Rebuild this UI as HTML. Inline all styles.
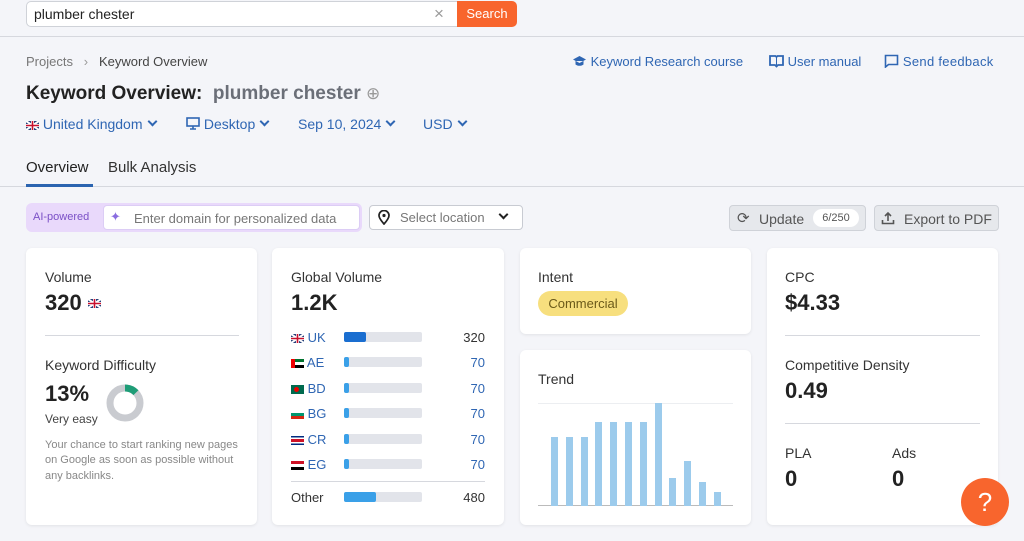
<!DOCTYPE html>
<html><head><meta charset="utf-8"><style>
*{box-sizing:border-box;margin:0;padding:0}
body{width:1024px;height:541px;overflow:hidden;background:#f4f5f9;font-family:"Liberation Sans",sans-serif;color:#333;position:relative}
.a{position:absolute;white-space:nowrap}
.card{position:absolute;background:#fff;border-radius:6px;box-shadow:0 1px 3px rgba(0,0,0,.08)}
.lbl{font-size:14px;color:#333}
.big{font-size:22px;font-weight:bold;color:#222}
.blue{color:#2f66b3}
.bar{position:absolute;height:10px;width:78px;background:#e2e4ea;border-radius:2px}
.bar i{display:block;height:10px;background:#3aa0e8;border-radius:2px}
.tb{position:absolute;width:7px;background:#9ccbec}
.flag{display:inline-block;width:13px;height:9px;vertical-align:middle}
.val{position:absolute;width:60px;text-align:right;font-size:13px;left:425px}
.chev{display:inline-block;width:7px;height:7px;border-right:2px solid #2f66b3;border-bottom:2px solid #2f66b3;transform:rotate(45deg);margin-left:6px;vertical-align:4px}
</style></head><body>
<div class="a" style="left:0;top:36px;width:1024px;height:1px;background:#d6d8de"></div>
<div class="a" style="left:26px;top:1px;width:436px;height:26px;background:#fff;border:1px solid #cfd2d8;border-radius:5px 0 0 5px"></div>
<div class="a" style="left:34px;top:6px;font-size:14px;color:#222">plumber chester</div>
<div class="a" style="left:434px;top:4px;font-size:17px;color:#999">×</div>
<div class="a" style="left:457px;top:1px;width:60px;height:26px;background:#f8652d;border-radius:0 5px 5px 0;color:#fff;font-size:13px;text-align:center;line-height:26px">Search</div>

<div class="a" style="left:26px;top:54px;font-size:13px;color:#777">Projects &nbsp;&nbsp;<span style="color:#999">›</span>&nbsp;&nbsp; <span style="color:#444">Keyword Overview</span></div>
<div class="a blue" style="left:572px;top:54px;font-size:13px">
<svg width="15" height="12" viewBox="0 0 15 12" style="vertical-align:-1px"><path d="M7.5 1L14 4.5 7.5 8 1 4.5z M3.5 6v3.5c2 1.7 6 1.7 8 0V6" fill="#2f66b3"/></svg> Keyword Research course</div>
<div class="a blue" style="left:769px;top:54px;font-size:13px"><svg width="15" height="14" viewBox="0 0 15 14" style="vertical-align:-2px"><path d="M1 2h5.5l1 1 1-1H14v9H9l-1.5 1.5L6 11H1z" fill="none" stroke="#2f66b3" stroke-width="1.8"/><path d="M7.5 3v8" stroke="#2f66b3"/></svg> User manual</div>
<div class="a blue" style="left:884px;top:54px;font-size:13px;letter-spacing:0.3px"><svg width="15" height="14" viewBox="0 0 15 14" style="vertical-align:-2px"><path d="M1.5 1.5h12v9h-9l-3 2.5z" fill="none" stroke="#2f66b3" stroke-width="1.6"/></svg> Send feedback</div>

<div class="a" style="left:26px;top:83px;font-size:19px;font-weight:bold;color:#222">Keyword Overview:&nbsp; <span style="color:#6b6f78">plumber chester</span> <span style="font-weight:normal;color:#999;font-size:17px">⊕</span></div>

<div class="a blue" style="left:26px;top:116px;font-size:14px"><svg class="flag" viewBox="0 0 13 9"><rect width="13" height="9" fill="#24407a"/><path d="M0 0L13 9M13 0L0 9" stroke="#fff" stroke-width="2"/><path d="M6.5 0v9M0 4.5h13" stroke="#fff" stroke-width="3"/><path d="M6.5 0v9M0 4.5h13" stroke="#c8102e" stroke-width="1.6"/></svg> United Kingdom<span class="chev"></span></div>
<div class="a blue" style="left:186px;top:116px;font-size:14px"><svg width="14" height="13" viewBox="0 0 14 13" style="vertical-align:-1px"><rect x="1" y="1" width="12" height="8" fill="none" stroke="#2f66b3" stroke-width="1.6"/><path d="M4 12h6M7 9v3" stroke="#2f66b3" stroke-width="1.6"/></svg> Desktop<span class="chev"></span></div>
<div class="a blue" style="left:298px;top:116px;font-size:14px">Sep 10, 2024<span class="chev"></span></div>
<div class="a blue" style="left:423px;top:116px;font-size:14px">USD<span class="chev"></span></div>

<div class="a" style="left:26px;top:159px;font-size:15px;color:#222">Overview</div>
<div class="a" style="left:108px;top:159px;font-size:15px;color:#333">Bulk Analysis</div>
<div class="a" style="left:0;top:186px;width:1024px;height:1px;background:#d6d8de"></div>
<div class="a" style="left:26px;top:184px;width:67px;height:3px;background:#2b64b0"></div>

<div class="a" style="left:26px;top:203px;width:336px;height:29px;background:#e9d9fb;border-radius:6px"></div>
<div class="a" style="left:33px;top:211px;font-size:11px;color:#7a4fc6">AI-powered</div>
<div class="a" style="left:103px;top:205px;width:257px;height:25px;background:#fff;border-radius:4px;border:1px solid #dccdf5"></div>
<div class="a" style="left:110px;top:209px;font-size:13px;color:#8a6de0">✦</div>
<div class="a" style="left:134px;top:211px;font-size:13px;color:#777">Enter domain for personalized data</div>
<div class="a" style="left:369px;top:205px;width:154px;height:25px;background:#fff;border:1px solid #c8cbd2;border-radius:4px"></div>
<div class="a" style="left:377px;top:210px"><svg width="14" height="15" viewBox="0 0 14 15"><path d="M7 14C3 9.5 2 7.5 2 5.5a5 5 0 0110 0c0 2-1 4-5 8.5z" fill="none" stroke="#222" stroke-width="1.7"/><circle cx="7" cy="5.5" r="1.6" fill="#222"/></svg></div>
<div class="a" style="left:400px;top:210px;font-size:13px;color:#777">Select location</div>
<div class="a" style="left:500px;top:211px;width:7px;height:7px;border-right:2px solid #222;border-bottom:2px solid #222;transform:rotate(45deg)"></div>

<div class="a" style="left:729px;top:205px;width:137px;height:26px;background:#e6e8ec;border:1px solid #cfd2d8;border-radius:4px"></div>
<div class="a" style="left:737px;top:209px;font-size:15px;color:#555">⟳</div>
<div class="a" style="left:759px;top:211px;font-size:14px;color:#555">Update</div>
<div class="a" style="left:813px;top:209px;width:46px;height:18px;background:#fff;border-radius:9px;font-size:11px;color:#555;text-align:center;line-height:18px">6/250</div>
<div class="a" style="left:874px;top:205px;width:125px;height:26px;background:#e6e8ec;border:1px solid #cfd2d8;border-radius:4px"></div>
<div class="a" style="left:881px;top:211px"><svg width="14" height="14" viewBox="0 0 14 14"><path d="M7 10V2M4 5l3-3 3 3M1.5 9v3.5h11V9" fill="none" stroke="#555" stroke-width="1.6"/></svg></div>
<div class="a" style="left:904px;top:211px;font-size:14px;color:#555">Export to PDF</div>

<div class="card" style="left:26px;top:248px;width:231px;height:277px">
<div class="a lbl" style="left:19px;top:21px">Volume</div>
<div class="a big" style="left:19px;top:42px">320 <svg class="flag" viewBox="0 0 13 9" style="vertical-align:2px"><rect width="13" height="9" fill="#24407a"/><path d="M0 0L13 9M13 0L0 9" stroke="#fff" stroke-width="2"/><path d="M6.5 0v9M0 4.5h13" stroke="#fff" stroke-width="3"/><path d="M6.5 0v9M0 4.5h13" stroke="#c8102e" stroke-width="1.6"/></svg></div>
<div class="a" style="left:19px;top:87px;width:194px;height:1px;background:#d6d8de"></div>
<div class="a lbl" style="left:19px;top:109px">Keyword Difficulty</div>
<div class="a big" style="left:19px;top:133px">13%</div>
<div class="a" style="left:19px;top:164px;font-size:12px;color:#444">Very easy</div>
<svg class="a" style="left:79px;top:135px" width="40" height="40" viewBox="0 0 40 40"><circle cx="20" cy="20" r="15" fill="none" stroke="#c9cbd0" stroke-width="7"/><circle cx="20" cy="20" r="15" fill="none" stroke="#1e9d77" stroke-width="7" stroke-dasharray="12.2 94.2" transform="rotate(-90 20 20)"/></svg>
<div class="a" style="left:19px;top:190px;font-size:11px;line-height:15.3px;color:#888;white-space:normal;width:200px">Your chance to start ranking new pages on Google as soon as possible without any backlinks.</div>
</div>

<div class="card" style="left:272px;top:248px;width:232px;height:277px">
<div class="a lbl" style="left:19px;top:21px">Global Volume</div>
<div class="a big" style="left:19px;top:42px">1.2K</div>
</div>

<div class="card" style="left:520px;top:248px;width:231px;height:86px">
<div class="a lbl" style="left:18px;top:21px">Intent</div>
<div class="a" style="left:18px;top:43px;width:90px;height:25px;background:#f7df7e;border-radius:13px;font-size:13px;color:#6b5a1a;text-align:center;line-height:25px">Commercial</div>
</div>
<div class="card" style="left:520px;top:350px;width:231px;height:175px">
<div class="a lbl" style="left:18px;top:21px">Trend</div>
<div class="a" style="left:18px;top:53px;width:195px;height:1px;background:#eceef1"></div>
<div class="a" style="left:18px;top:155px;width:195px;height:1px;background:#bbb"></div>
</div>

<div class="card" style="left:767px;top:248px;width:231px;height:277px">
<div class="a lbl" style="left:18px;top:21px">CPC</div>
<div class="a big" style="left:18px;top:42px">$4.33</div>
<div class="a" style="left:18px;top:87px;width:195px;height:1px;background:#d6d8de"></div>
<div class="a lbl" style="left:18px;top:109px">Competitive Density</div>
<div class="a big" style="left:18px;top:130px">0.49</div>
<div class="a" style="left:18px;top:175px;width:195px;height:1px;background:#d6d8de"></div>
<div class="a lbl" style="left:18px;top:197px">PLA</div>
<div class="a big" style="left:18px;top:218px">0</div>
<div class="a lbl" style="left:125px;top:197px">Ads</div>
<div class="a big" style="left:125px;top:218px">0</div>
</div>

<div class="a" style="left:961px;top:478px;width:48px;height:48px;border-radius:50%;background:#f8652d;color:#fff;font-size:26px;text-align:center;line-height:48px">?</div>

<div class="a" style="left:291px;top:330px;font-size:13px"><svg class="flag" viewBox="0 0 13 9"><rect width="13" height="9" fill="#24407a"/><path d="M0 0L13 9M13 0L0 9" stroke="#fff" stroke-width="2"/><path d="M6.5 0v9M0 4.5h13" stroke="#fff" stroke-width="3"/><path d="M6.5 0v9M0 4.5h13" stroke="#c8102e" stroke-width="1.6"/></svg> <span class="blue">UK</span></div>
<div class="bar" style="left:344px;top:332px"><i style="width:22px;background:#1a6ed0"></i></div>
<div class="val" style="top:330px;color:#333">320</div>

<div class="a" style="left:291px;top:355px;font-size:13px"><svg class="flag" viewBox="0 0 13 9"><rect width="13" height="3" fill="#00732f"/><rect y="3" width="13" height="3" fill="#fff"/><rect y="6" width="13" height="3" fill="#000"/><rect width="4" height="9" fill="#e00"/></svg> <span class="blue">AE</span></div>
<div class="bar" style="left:344px;top:357px"><i style="width:5px"></i></div>
<div class="val blue" style="top:355px">70</div>

<div class="a" style="left:291px;top:381px;font-size:13px"><svg class="flag" viewBox="0 0 13 9"><rect width="13" height="9" fill="#006a4e"/><circle cx="5.5" cy="4.5" r="2.5" fill="#e00"/></svg> <span class="blue">BD</span></div>
<div class="bar" style="left:344px;top:383px"><i style="width:5px"></i></div>
<div class="val blue" style="top:381px">70</div>

<div class="a" style="left:291px;top:406px;font-size:13px"><svg class="flag" viewBox="0 0 13 9"><rect width="13" height="3" fill="#fff"/><rect y="3" width="13" height="3" fill="#00966e"/><rect y="6" width="13" height="3" fill="#d62612"/></svg> <span class="blue">BG</span></div>
<div class="bar" style="left:344px;top:408px"><i style="width:5px"></i></div>
<div class="val blue" style="top:406px">70</div>

<div class="a" style="left:291px;top:432px;font-size:13px"><svg class="flag" viewBox="0 0 13 9"><rect width="13" height="9" fill="#002b7f"/><rect y="1.5" width="13" height="6" fill="#fff"/><rect y="3" width="13" height="3" fill="#ce1126"/></svg> <span class="blue">CR</span></div>
<div class="bar" style="left:344px;top:434px"><i style="width:5px"></i></div>
<div class="val blue" style="top:432px">70</div>

<div class="a" style="left:291px;top:457px;font-size:13px"><svg class="flag" viewBox="0 0 13 9"><rect width="13" height="3" fill="#ce1126"/><rect y="3" width="13" height="3" fill="#fff"/><rect y="6" width="13" height="3" fill="#000"/></svg> <span class="blue">EG</span></div>
<div class="bar" style="left:344px;top:459px"><i style="width:5px"></i></div>
<div class="val blue" style="top:457px">70</div>

<div class="a" style="left:291px;top:481px;width:194px;height:1px;background:#d6d8de"></div>
<div class="a" style="left:291px;top:490px;font-size:13px;color:#333">Other</div>
<div class="bar" style="left:344px;top:492px"><i style="width:32px"></i></div>
<div class="val" style="top:490px;color:#333">480</div>

<div class="tb" style="left:551px;top:437px;height:69px"></div>
<div class="tb" style="left:566px;top:437px;height:69px"></div>
<div class="tb" style="left:581px;top:437px;height:69px"></div>
<div class="tb" style="left:595px;top:422px;height:84px"></div>
<div class="tb" style="left:610px;top:422px;height:84px"></div>
<div class="tb" style="left:625px;top:422px;height:84px"></div>
<div class="tb" style="left:640px;top:422px;height:84px"></div>
<div class="tb" style="left:655px;top:403px;height:103px"></div>
<div class="tb" style="left:669px;top:478px;height:28px"></div>
<div class="tb" style="left:684px;top:461px;height:45px"></div>
<div class="tb" style="left:699px;top:482px;height:24px"></div>
<div class="tb" style="left:714px;top:492px;height:14px"></div>
</body></html>
